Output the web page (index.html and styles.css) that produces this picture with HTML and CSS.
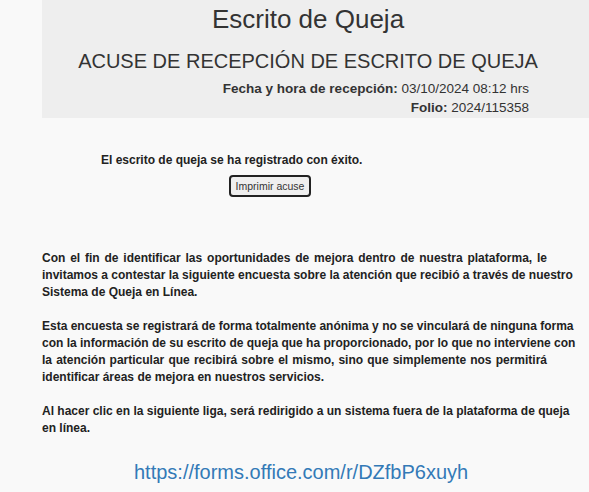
FILE: index.html
```html
<!DOCTYPE html>
<html lang="es">
<head>
<meta charset="utf-8">
<title>Escrito de Queja</title>
<link rel="stylesheet" href="styles.css">
</head>
<body>
<header class="hero">
  <h1 class="title">Escrito de Queja</h1>
  <h2 class="subtitle">ACUSE DE RECEPCIÓN DE ESCRITO DE QUEJA</h2>
  <div class="meta"><b>Fecha y hora de recepción:</b> 03/10/2024 08:12 hrs</div>
  <div class="meta"><b>Folio:</b> 2024/115358</div>
</header>
<main class="content">
  <p class="success">El escrito de queja se ha registrado con éxito.</p>
  <div class="actions"><button class="btn" type="button">Imprimir acuse</button></div>
  <p class="para">
    <span class="ln">Con el fin de identificar las oportunidades de mejora dentro de nuestra plataforma, le</span>
    <span class="ln">invitamos a contestar la siguiente encuesta sobre la atención que recibió a través de nuestro</span>
    <span class="ln last">Sistema de Queja en Línea.</span>
  </p>
  <p class="para">
    <span class="ln">Esta encuesta se registrará de forma totalmente anónima y no se vinculará de ninguna forma</span>
    <span class="ln">con la información de su escrito de queja que ha proporcionado, por lo que no interviene con</span>
    <span class="ln">la atención particular que recibirá sobre el mismo, sino que simplemente nos permitirá</span>
    <span class="ln last">identificar áreas de mejora en nuestros servicios.</span>
  </p>
  <p class="para">
    <span class="ln">Al hacer clic en la siguiente liga, será redirigido a un sistema fuera de la plataforma de queja</span>
    <span class="ln last">en línea.</span>
  </p>
  <p class="link-row"><a class="survey" href="#">https://forms.office.com/r/DZfbP6xuyh</a></p>
</main>
</body>
</html>
```

FILE: styles.css
```css
html, body {
  margin: 0;
  padding: 0;
}
body {
  background: #f9f9f9;
  color: #333333;
  font-family: "Liberation Sans", Arial, sans-serif;
  width: 589px;
  height: 492px;
  overflow: hidden;
}
.hero {
  margin-left: 42px;
  background: #eeeeee;
  padding: 3px 15px 1px 0;
  height: 114px;
}
.title {
  margin: 0;
  font-size: 26px;
  font-weight: normal;
  line-height: 32px;
  text-align: center;
  color: #333333;
  white-space: nowrap;
}
.subtitle {
  margin: 12px 0 0;
  font-size: 20px;
  font-weight: normal;
  line-height: 28px;
  text-align: center;
  color: #333333;
  white-space: nowrap;
}
.subtitle + .meta {
  margin-top: 4px;
}
.meta {
  padding-right: 45px;
  font-size: 13.5px;
  line-height: 19px;
  text-align: right;
  color: #333333;
}
.meta b {
  font-weight: bold;
}
.content {
  margin-left: 42px;
  width: 505px;
}
.success {
  margin: 34px 0 0;
  padding-left: 59px;
  font-size: 12px;
  font-weight: bold;
  line-height: 17px;
  color: #222222;
}
.actions {
  margin-top: 6px;
  padding-left: 187px;
  display: flex;
}
.btn {
  width: 82px;
  height: 22px;
  padding: 0;
  border: 2px solid #222222;
  border-radius: 4px;
  background: #efefef;
  color: #333333;
  font-family: "Liberation Sans", Arial, sans-serif;
  font-size: 10.5px;
  line-height: 18px;
  text-align: center;
}
.para {
  margin: 17px 0 0;
  font-size: 12px;
  font-weight: bold;
  line-height: 17px;
  color: #222222;
}
.actions + .para {
  margin-top: 53px;
}
.ln {
  display: block;
  text-align: justify;
  text-align-last: justify;
  white-space: nowrap;
}
.ln.last {
  text-align-last: left;
}
.link-row {
  margin: 23px 0 0;
  padding-left: 92px;
  font-size: 20px;
  line-height: 24px;
}
.survey {
  color: #337ab7;
  text-decoration: none;
}
```
